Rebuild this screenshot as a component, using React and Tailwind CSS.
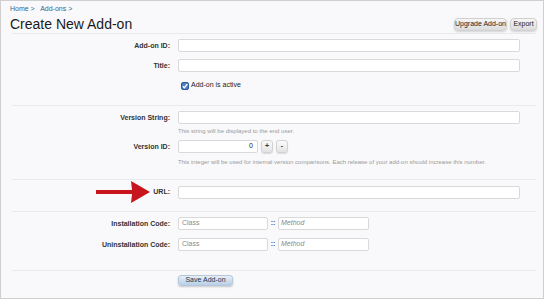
import React from 'react';

const FONT = { fontFamily: '"Liberation Sans", Arial, sans-serif' };

const Sep = ({ className = '' }) => (
  <div className={`h-px bg-[#e6ebf0] ${className}`} />
);

const Label = ({ children }) => (
  <div className="w-[158px] shrink-0 flex items-center justify-end text-[7px] leading-[10px] font-bold text-[#333]">
    {children}
  </div>
);

const TextBox = ({ className = '', children }) => (
  <div className={`h-[13px] bg-white border border-[#d9d9d9] rounded-[2px] ${className}`}>
    {children}
  </div>
);

const Row = ({ label, children, className = '' }) => (
  <div className={`flex gap-[8px] ${className}`}>
    <Label>{label}</Label>
    <div className="flex-1 flex items-center">{children}</div>
  </div>
);

const SmallBtn = ({ children }) => (
  <div className="w-[12px] h-[13px] rounded-[3px] border border-[#d2d2d2] bg-gradient-to-b from-[#fbfbfb] to-[#e3e3e3] shadow-[0_1px_1px_rgba(0,0,0,0.12)] flex items-center justify-center text-[7px] font-bold text-[#333]">
    {children}
  </div>
);

const GrayBtn = ({ children, className = '' }) => (
  <div className={`h-[13px] whitespace-nowrap rounded-[4px] border border-[#d0d0d0] bg-gradient-to-b from-[#f6f6f6] to-[#dcdcdc] shadow-[0_1px_2px_rgba(0,0,0,0.15)] flex items-center justify-center text-[7px] text-[#222] ${className}`}>
    {children}
  </div>
);

const CodeInputs = () => (
  <div className="flex items-center">
    <TextBox className="w-[90px] h-[12px] flex items-center pl-[3px] text-[7px] text-[#8a8a8a]">Class</TextBox>
    <span className="w-[10px] text-center text-[7px] font-bold text-[#555]">::</span>
    <TextBox className="w-[91px] h-[12px] flex items-center pl-[2px] text-[7px] italic text-[#8a8a8a]">Method</TextBox>
  </div>
);

export default function App() {
  return (
    <div className="w-[546px] h-[300px] bg-white" style={FONT}>
      <div className="w-[544px] h-[299px] border border-[#cfcfcf] bg-[#f9f9fb] overflow-hidden">
        {/* header */}
        <div className="pl-[9px] pr-[6px] pt-[3px]">
          <div className="text-[7px] text-[#3a5e8c] leading-[9px]">
            Home &gt;&nbsp;&nbsp; Add-ons &gt;
          </div>
          <div className="flex items-center justify-between mt-[3px]">
            <h1 className="text-[14px] leading-[16px] text-[#1a1a1a]">Create New Add-on</h1>
            <div className="flex gap-[3px] mt-[1px]">
              <GrayBtn className="w-[53px]">Upgrade Add-on</GrayBtn>
              <GrayBtn className="w-[27px]">Export</GrayBtn>
            </div>
          </div>
        </div>

        <div className="pl-[11px] pr-[7px]">
          <Sep className="mt-[1px]" />

          <Row label="Add-on ID:" className="mt-[5px]">
            <TextBox className="w-[342px]" />
          </Row>
          <Row label="Title:" className="mt-[7px]">
            <TextBox className="w-[342px]" />
          </Row>
          <Row label="" className="mt-[9px]">
            <div className="flex items-center h-[9px] text-[7px] text-[#222]">
              <svg width="8" height="8" viewBox="0 0 8 8" className="ml-[3px] mr-[2px]">
                <rect x="0.5" y="0.5" width="7" height="7" rx="1.5" fill="#4f7fc0" stroke="#2f5b99" />
                <path d="M1.8 4.2 L3.4 5.8 L6.3 2" stroke="#fff" strokeWidth="1.3" fill="none" />
              </svg>
              <span>Add-on is active</span>
            </div>
          </Row>

          <Sep className="mt-[15px]" />

          <Row label="Version String:" className="mt-[5px]">
            <TextBox className="w-[342px]" />
          </Row>
          <Row label="" className="mt-[3px]">
            <div className="text-[6px] text-[#9a9a9a] leading-[8px]">This string will be displayed to the end user.</div>
          </Row>
          <Row label="Version ID:" className="mt-[5px]">
            <div className="flex items-center gap-[3px]">
              <TextBox className="w-[80px] flex items-center justify-end pr-[4px] text-[7px] text-[#222]">0</TextBox>
              <SmallBtn>+</SmallBtn>
              <SmallBtn>-</SmallBtn>
            </div>
          </Row>
          <Row label="" className="mt-[5px]">
            <div className="text-[6px] text-[#9a9a9a] leading-[8px] whitespace-nowrap">
              This integer will be used for internal version comparisons. Each release of your add-on should increase this number.
            </div>
          </Row>

          <Sep className="mt-[13px]" />

          <Row
            label={
              <div className="flex items-center gap-[3px]">
                <svg width="54" height="22" viewBox="0 0 54 22">
                  <polygon points="0,9 36,9 35,0 54,11 35,22 36,13 0,13" fill="#c8151d" />
                </svg>
                <span>URL:</span>
              </div>
            }
            className="mt-[1px]"
          >
            <TextBox className="w-[342px]" />
          </Row>

          <Sep className="mt-[8px]" />

          <Row label="Installation Code:" className="mt-[5px]">
            <CodeInputs />
          </Row>
          <Row label="Uninstallation Code:" className="mt-[8px]">
            <CodeInputs />
          </Row>

          <Sep className="mt-[19px] bg-[#dcf0f2]" />

          <Row label="" className="mt-[4px]">
            <div className="w-[55px] h-[11px] rounded-[3px] border border-[#b5c8dc] bg-gradient-to-b from-[#e6eef7] to-[#b9cfe5] shadow-[0_1px_2px_rgba(0,0,0,0.2)] flex items-center justify-center text-[7px] text-[#23344d]">
              Save Add-on
            </div>
          </Row>
        </div>
      </div>
    </div>
  );
}
